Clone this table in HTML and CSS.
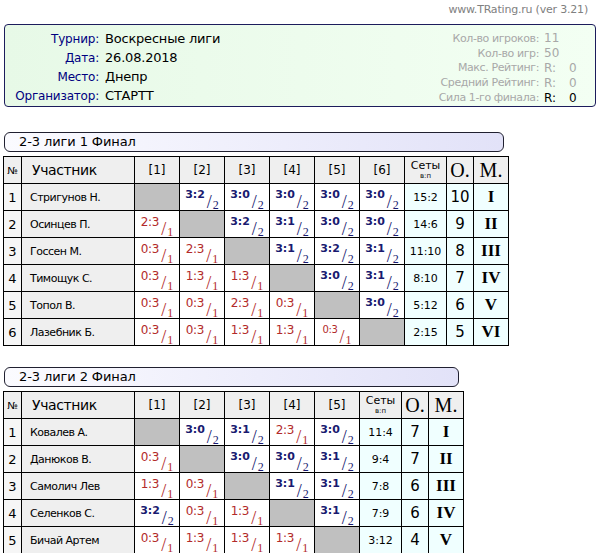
FILE: index.html
```html
<!DOCTYPE html>
<html>
<head>
<meta charset="utf-8">
<link rel="stylesheet" href="styles.css">
</head>
<body>
<div class="top">www.TRating.ru (ver 3.21)</div>
<div class="info">
  <div class="info-left">
    <span class="lbl">Турнир:</span><span class="val">Воскресные лиги</span>
    <span class="lbl">Дата:</span><span class="val">26.08.2018</span>
    <span class="lbl">Место:</span><span class="val">Днепр</span>
    <span class="lbl">Организатор:</span><span class="val">СТАРТТ</span>
  </div>
  <div class="info-right">
    <span class="rl">Кол-во игроков:</span><span class="rv">11</span>
    <span class="rl">Кол-во игр:</span><span class="rv">50</span>
    <span class="rl">Макс. Рейтинг:</span><span class="rv"><span class="r">R:</span>0</span>
    <span class="rl">Средний Рейтинг:</span><span class="rv"><span class="r">R:</span>0</span>
    <span class="rl">Сила 1-го финала:</span><span class="rv dark"><span class="r">R:</span>0</span>
  </div>
</div>

<div class="title t1">2-3 лиги 1 Финал</div>
<table class="grid g1">
  <colgroup>
    <col class="c-no"><col class="c-name"><col class="c-s"><col class="c-s"><col class="c-s"><col class="c-s"><col class="c-s"><col class="c-s"><col class="c-sets"><col class="c-o"><col class="c-m">
  </colgroup>
  <tr class="hd">
    <th class="h-no">№</th><th class="h-name">Участник</th>
    <th>[1]</th><th>[2]</th><th>[3]</th><th>[4]</th><th>[5]</th><th>[6]</th>
    <th class="h-sets">Сеты<span>в:п</span></th><th class="h-om">О.</th><th class="h-om">М.</th>
  </tr>
  <tr>
    <td class="no">1</td><td class="name">Стригунов Н.</td>
    <td class="x"></td>
    <td class="w"><div class="sc"><span class="s">3:2</span><span class="sl">/</span><span class="sb">2</span></div></td>
    <td class="w"><div class="sc"><span class="s">3:0</span><span class="sl">/</span><span class="sb">2</span></div></td>
    <td class="w"><div class="sc"><span class="s">3:0</span><span class="sl">/</span><span class="sb">2</span></div></td>
    <td class="w"><div class="sc"><span class="s">3:0</span><span class="sl">/</span><span class="sb">2</span></div></td>
    <td class="w"><div class="sc"><span class="s">3:0</span><span class="sl">/</span><span class="sb">2</span></div></td>
    <td class="sets">15:2</td><td class="pts">10</td><td class="pl">I</td>
  </tr>
  <tr>
    <td class="no">2</td><td class="name">Осинцев П.</td>
    <td class="l"><div class="sc"><span class="s">2:3</span><span class="sl">/</span><span class="sb">1</span></div></td>
    <td class="x"></td>
    <td class="w"><div class="sc"><span class="s">3:2</span><span class="sl">/</span><span class="sb">2</span></div></td>
    <td class="w"><div class="sc"><span class="s">3:1</span><span class="sl">/</span><span class="sb">2</span></div></td>
    <td class="w"><div class="sc"><span class="s">3:0</span><span class="sl">/</span><span class="sb">2</span></div></td>
    <td class="w"><div class="sc"><span class="s">3:0</span><span class="sl">/</span><span class="sb">2</span></div></td>
    <td class="sets">14:6</td><td class="pts">9</td><td class="pl">II</td>
  </tr>
  <tr>
    <td class="no">3</td><td class="name">Госсен М.</td>
    <td class="l"><div class="sc"><span class="s">0:3</span><span class="sl">/</span><span class="sb">1</span></div></td>
    <td class="l"><div class="sc"><span class="s">2:3</span><span class="sl">/</span><span class="sb">1</span></div></td>
    <td class="x"></td>
    <td class="w"><div class="sc"><span class="s">3:1</span><span class="sl">/</span><span class="sb">2</span></div></td>
    <td class="w"><div class="sc"><span class="s">3:2</span><span class="sl">/</span><span class="sb">2</span></div></td>
    <td class="w"><div class="sc"><span class="s">3:1</span><span class="sl">/</span><span class="sb">2</span></div></td>
    <td class="sets">11:10</td><td class="pts">8</td><td class="pl">III</td>
  </tr>
  <tr>
    <td class="no">4</td><td class="name">Тимощук С.</td>
    <td class="l"><div class="sc"><span class="s">0:3</span><span class="sl">/</span><span class="sb">1</span></div></td>
    <td class="l"><div class="sc"><span class="s">1:3</span><span class="sl">/</span><span class="sb">1</span></div></td>
    <td class="l"><div class="sc"><span class="s">1:3</span><span class="sl">/</span><span class="sb">1</span></div></td>
    <td class="x"></td>
    <td class="w"><div class="sc"><span class="s">3:0</span><span class="sl">/</span><span class="sb">2</span></div></td>
    <td class="w"><div class="sc"><span class="s">3:1</span><span class="sl">/</span><span class="sb">2</span></div></td>
    <td class="sets">8:10</td><td class="pts">7</td><td class="pl">IV</td>
  </tr>
  <tr>
    <td class="no">5</td><td class="name">Топол В.</td>
    <td class="l"><div class="sc"><span class="s">0:3</span><span class="sl">/</span><span class="sb">1</span></div></td>
    <td class="l"><div class="sc"><span class="s">0:3</span><span class="sl">/</span><span class="sb">1</span></div></td>
    <td class="l"><div class="sc"><span class="s">2:3</span><span class="sl">/</span><span class="sb">1</span></div></td>
    <td class="l"><div class="sc"><span class="s">0:3</span><span class="sl">/</span><span class="sb">1</span></div></td>
    <td class="x"></td>
    <td class="w"><div class="sc"><span class="s">3:0</span><span class="sl">/</span><span class="sb">2</span></div></td>
    <td class="sets">5:12</td><td class="pts">6</td><td class="pl">V</td>
  </tr>
  <tr>
    <td class="no">6</td><td class="name">Лазебник Б.</td>
    <td class="l"><div class="sc"><span class="s">0:3</span><span class="sl">/</span><span class="sb">1</span></div></td>
    <td class="l"><div class="sc"><span class="s">0:3</span><span class="sl">/</span><span class="sb">1</span></div></td>
    <td class="l"><div class="sc"><span class="s">1:3</span><span class="sl">/</span><span class="sb">1</span></div></td>
    <td class="l"><div class="sc"><span class="s">1:3</span><span class="sl">/</span><span class="sb">1</span></div></td>
    <td class="l"><div class="sc small"><span class="s">0:3</span><span class="sl">/</span><span class="sb">1</span></div></td>
    <td class="x"></td>
    <td class="sets">2:15</td><td class="pts">5</td><td class="pl">VI</td>
  </tr>
</table>

<div class="title t2">2-3 лиги 2 Финал</div>
<table class="grid g2">
  <colgroup>
    <col class="c-no"><col class="c-name"><col class="c-s"><col class="c-s"><col class="c-s"><col class="c-s"><col class="c-s"><col class="c-sets"><col class="c-o"><col class="c-m">
  </colgroup>
  <tr class="hd">
    <th class="h-no">№</th><th class="h-name">Участник</th>
    <th>[1]</th><th>[2]</th><th>[3]</th><th>[4]</th><th>[5]</th>
    <th class="h-sets">Сеты<span>в:п</span></th><th class="h-om">О.</th><th class="h-om">М.</th>
  </tr>
  <tr>
    <td class="no">1</td><td class="name">Ковалев А.</td>
    <td class="x"></td>
    <td class="w"><div class="sc"><span class="s">3:0</span><span class="sl">/</span><span class="sb">2</span></div></td>
    <td class="w"><div class="sc"><span class="s">3:1</span><span class="sl">/</span><span class="sb">2</span></div></td>
    <td class="l"><div class="sc"><span class="s">2:3</span><span class="sl">/</span><span class="sb">1</span></div></td>
    <td class="w"><div class="sc"><span class="s">3:0</span><span class="sl">/</span><span class="sb">2</span></div></td>
    <td class="sets">11:4</td><td class="pts">7</td><td class="pl">I</td>
  </tr>
  <tr>
    <td class="no">2</td><td class="name">Данюков В.</td>
    <td class="l"><div class="sc"><span class="s">0:3</span><span class="sl">/</span><span class="sb">1</span></div></td>
    <td class="x"></td>
    <td class="w"><div class="sc"><span class="s">3:0</span><span class="sl">/</span><span class="sb">2</span></div></td>
    <td class="w"><div class="sc"><span class="s">3:0</span><span class="sl">/</span><span class="sb">2</span></div></td>
    <td class="w"><div class="sc"><span class="s">3:1</span><span class="sl">/</span><span class="sb">2</span></div></td>
    <td class="sets">9:4</td><td class="pts">7</td><td class="pl">II</td>
  </tr>
  <tr>
    <td class="no">3</td><td class="name">Самолич Лев</td>
    <td class="l"><div class="sc"><span class="s">1:3</span><span class="sl">/</span><span class="sb">1</span></div></td>
    <td class="l"><div class="sc"><span class="s">0:3</span><span class="sl">/</span><span class="sb">1</span></div></td>
    <td class="x"></td>
    <td class="w"><div class="sc"><span class="s">3:1</span><span class="sl">/</span><span class="sb">2</span></div></td>
    <td class="w"><div class="sc"><span class="s">3:1</span><span class="sl">/</span><span class="sb">2</span></div></td>
    <td class="sets">7:8</td><td class="pts">6</td><td class="pl">III</td>
  </tr>
  <tr>
    <td class="no">4</td><td class="name">Селенков С.</td>
    <td class="w"><div class="sc"><span class="s">3:2</span><span class="sl">/</span><span class="sb">2</span></div></td>
    <td class="l"><div class="sc"><span class="s">0:3</span><span class="sl">/</span><span class="sb">1</span></div></td>
    <td class="l"><div class="sc"><span class="s">1:3</span><span class="sl">/</span><span class="sb">1</span></div></td>
    <td class="x"></td>
    <td class="w"><div class="sc"><span class="s">3:1</span><span class="sl">/</span><span class="sb">2</span></div></td>
    <td class="sets">7:9</td><td class="pts">6</td><td class="pl">IV</td>
  </tr>
  <tr>
    <td class="no">5</td><td class="name">Бичай Артем</td>
    <td class="l"><div class="sc"><span class="s">0:3</span><span class="sl">/</span><span class="sb">1</span></div></td>
    <td class="l"><div class="sc"><span class="s">1:3</span><span class="sl">/</span><span class="sb">1</span></div></td>
    <td class="l"><div class="sc"><span class="s">1:3</span><span class="sl">/</span><span class="sb">1</span></div></td>
    <td class="l"><div class="sc"><span class="s">1:3</span><span class="sl">/</span><span class="sb">1</span></div></td>
    <td class="x"></td>
    <td class="sets">3:12</td><td class="pts">4</td><td class="pl">V</td>
  </tr>
</table>
</body>
</html>
```

FILE: styles.css
```css
html, body {
  margin: 0;
  background: #ffffff;
}
body {
  padding: 0 3px;
  font-family: "DejaVu Sans", sans-serif;
  color: #000;
}
.top {
  text-align: right;
  font-size: 11px;
  letter-spacing: -0.2px;
  color: #808080;
  height: 24px;
  line-height: 20px;
  padding-right: 9px;
}
.info {
  margin: 0 1px;
  height: 83px;
  box-sizing: border-box;
  border: 1px solid #1c1c5c;
  border-radius: 4px;
  background: linear-gradient(to right, #e7f9e7, #f3fff3);
  display: flex;
  justify-content: space-between;
}
.info-left {
  display: grid;
  grid-template-columns: 90px auto;
  column-gap: 6px;
  padding: 4px 0 0 4px;
  grid-auto-rows: 19px;
  align-items: center;
}
.lbl {
  text-align: right;
  font-size: 12px;
  letter-spacing: -0.2px;
  color: #000080;
}
.val {
  font-size: 13px;
  letter-spacing: -0.2px;
}
.info-right {
  display: grid;
  grid-template-columns: auto 46px;
  column-gap: 5px;
  padding: 6px 5px 0 0;
  grid-auto-rows: 14.8px;
  align-items: center;
  font-size: 11px;
  color: #a8a8a8;
}
.rl { text-align: right; letter-spacing: -0.4px; }
.rv { font-size: 12px; }
.rv.dark { color: #000; }
.r { display: inline-block; width: 25px; }

.title {
  box-sizing: border-box;
  height: 20px;
  margin: 25px 1px 0;
  border: 1px solid #202030;
  border-radius: 6px;
  background: linear-gradient(to right, #fbfbff, #e2e2f8);
  padding-left: 14px;
  font-size: 13px;
  letter-spacing: -0.1px;
  line-height: 18px;
}
.t1 { width: 500px; }
.t2 { width: 455px; margin-top: 21px; }

.grid {
  border-collapse: collapse;
  table-layout: fixed;
  margin-top: 4px;
}
.g1 { width: 506px; }
.g2 { width: 461px; }
.c-no { width: 18px; }
.c-name { width: 113px; }
.c-s { width: 45px; }
.c-sets { width: 42px; }
.c-o { width: 27px; }
.c-m { width: 35px; }

.grid th, .grid td {
  border: 1px solid #000;
  padding: 0;
  white-space: nowrap;
}
.grid tr { height: 27px; }
.grid tr.hd { height: 27px; }
.grid th {
  background: #efefef;
  font-weight: normal;
  font-size: 12px;
  text-align: center;
}
.grid th.h-no { font-size: 10px; }
.grid th.h-name {
  font-size: 14px;
  letter-spacing: -0.4px;
  text-align: left;
  padding-left: 10px;
}
.grid th.h-sets {
  font-size: 11px;
  line-height: 12px;
}
.grid th.h-sets span {
  display: block;
  font-size: 7px;
  line-height: 8px;
}
.grid th.h-om {
  font-family: "Liberation Serif", serif;
  font-size: 20px;
}
.grid td.no {
  background: #f6f6f6;
  text-align: center;
  font-size: 13px;
}
.grid td.name {
  background: #efefef;
  font-size: 11px;
  letter-spacing: -0.5px;
  padding-left: 8px;
}
.grid td.x { background: #c0c0c0; }
.grid td.w, .grid td.l { background: #fff; }
.sc {
  display: flex;
  justify-content: center;
  align-items: flex-start;
  height: 25px;
}
.sc .s {
  margin-top: 3px;
  font-size: 12px;
  line-height: 14px;
}
.sc .sl {
  font-family: "Liberation Serif", serif;
  font-size: 18px;
  line-height: 14px;
  margin: 10px 0 0 2px;
}
.sc .sb {
  font-family: "Liberation Serif", serif;
  font-size: 12px;
  line-height: 8px;
  margin: 16px 0 0 1px;
}
.w .sc { color: #1a1a70; }
.w .sc .s { font-weight: bold; font-size: 11px; }
.l .sc { color: #b22a2a; }
.l .sc .s { letter-spacing: -0.3px; }
.sc.small .s { font-size: 10px; }
.grid td.sets {
  background: #f0ffff;
  text-align: center;
  font-size: 11px;
}
.grid td.pts {
  background: #f0ffff;
  text-align: center;
  font-size: 15px;
}
.grid td.pl {
  background: #f0ffff;
  text-align: center;
  font-family: "Liberation Serif", serif;
  font-weight: bold;
  font-size: 17px;
}
```
